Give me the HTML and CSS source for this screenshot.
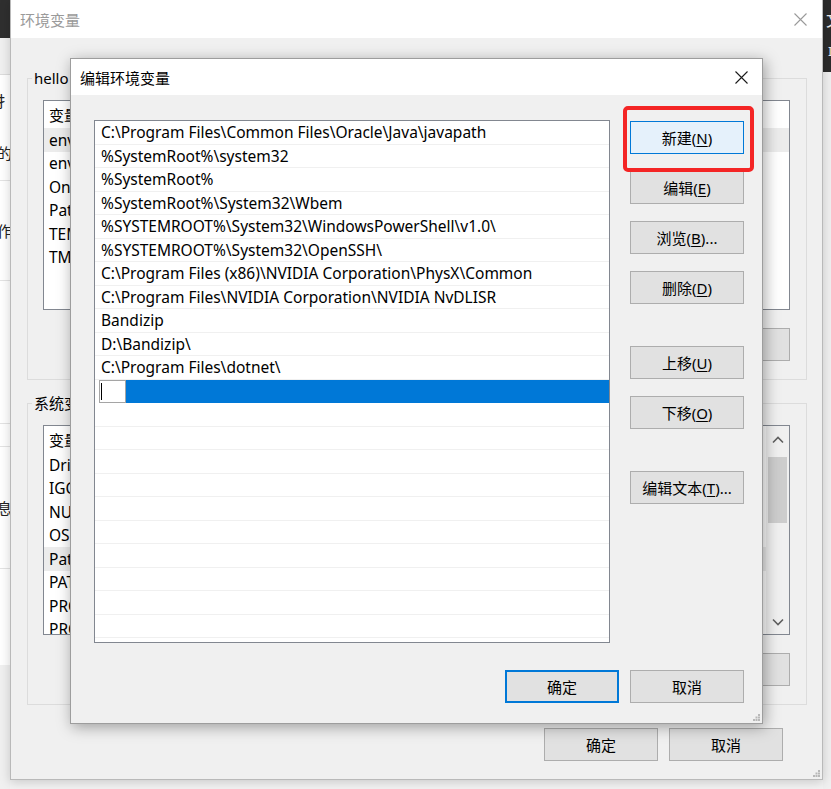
FILE: index.html
```html
<!DOCTYPE html>
<html lang="zh-CN">
<head>
<meta charset="utf-8">
<title>编辑环境变量</title>
<link rel="stylesheet" href="styles.css">
</head>
<body>
<div class="desktop">
  <div class="strip left-strip">
    <div class="ls-dark"></div>
    <div class="ls-gray"></div>
    <div class="ls-cell h50"><span class="frag">处理扌</span></div>
    <div class="ls-cell h55"><span class="frag">目的</span></div>
    <div class="ls-cell h100 lined"><span class="frag">操作</span></div>
    <div class="ls-cell h143 lined"></div>
    <div class="ls-cell h23 lined"></div>
    <div class="ls-cell h122 lined"><span class="frag">信息</span></div>
    <div class="ls-cell h97 lined"></div>
    <div class="ls-rest lined"></div>
  </div>
  <div class="strip right-strip">
    <div class="rs-dark"><span class="rs-a">文</span><span class="rs-b">I</span></div>
  </div>

  <div class="win outer">
    <div class="titlebar outer-title">
      <span class="title dim">环境变量</span>
      <svg class="close" width="13" height="13" viewBox="0 0 13 13"><path d="M0.5 0.5L12.5 12.5M12.5 0.5L0.5 12.5" stroke="#9a9a9a" stroke-width="1.1" fill="none"/></svg>
    </div>
    <div class="outer-body">
      <div class="group">
        <div class="legend">hello 的用户变量(<u>U</u>)</div>
        <div class="listview">
          <div class="lv-head"><span class="c1">变量</span><span class="c2">值</span></div>
          <div class="lv-row hl"><span class="c1">env_home</span><span class="c2"></span></div>
          <div class="lv-row"><span class="c1">env_path</span><span class="c2"></span></div>
          <div class="lv-row"><span class="c1">OneDrive</span><span class="c2"></span></div>
          <div class="lv-row"><span class="c1">Path</span><span class="c2"></span></div>
          <div class="lv-row"><span class="c1">TEMP</span><span class="c2"></span></div>
          <div class="lv-row"><span class="c1">TMP</span><span class="c2"></span></div>
        </div>
        <div class="btnrow">
          <button class="btn">新建(<u>N</u>)...</button>
          <button class="btn">编辑(<u>E</u>)...</button>
          <button class="btn">删除(<u>D</u>)</button>
        </div>
      </div>
      <div class="group sys">
        <div class="legend">系统变量(<u>S</u>)</div>
        <div class="listview scrolled">
          <div class="lv-main">
            <div class="lv-head"><span class="c1">变量</span><span class="c2">值</span></div>
            <div class="lv-row"><span class="c1">DriverData</span><span class="c2"></span></div>
            <div class="lv-row"><span class="c1">IGCCSVC_DB</span><span class="c2"></span></div>
            <div class="lv-row"><span class="c1">NUMBER_OF_PROCESSORS</span><span class="c2"></span></div>
            <div class="lv-row"><span class="c1">OS</span><span class="c2"></span></div>
            <div class="lv-row hl"><span class="c1">Path</span><span class="c2"></span></div>
            <div class="lv-row"><span class="c1">PATHEXT</span><span class="c2"></span></div>
            <div class="lv-row"><span class="c1">PROCESSOR_ARCHITECTURE</span><span class="c2"></span></div>
            <div class="lv-row"><span class="c1">PROCESSOR_IDENTIFIER</span><span class="c2"></span></div>
          </div>
          <div class="vscroll">
            <svg class="arrow" width="12" height="8" viewBox="0 0 12 8"><path d="M1 6.5L6 1.5L11 6.5" stroke="#606060" stroke-width="1.6" fill="none"/></svg>
            <div class="track"><div class="thumb"></div></div>
            <svg class="arrow" width="12" height="8" viewBox="0 0 12 8"><path d="M1 1.5L6 6.5L11 1.5" stroke="#606060" stroke-width="1.6" fill="none"/></svg>
          </div>
        </div>
        <div class="btnrow">
          <button class="btn">新建(<u>W</u>)...</button>
          <button class="btn">编辑(<u>I</u>)...</button>
          <button class="btn">删除(<u>L</u>)</button>
        </div>
      </div>
      <div class="footer outer-footer">
        <button class="btn">确定</button>
        <button class="btn">取消</button>
      </div>
    </div>
    <svg class="grip" width="7" height="7" viewBox="0 0 7 7"><g fill="#b8b8b8"><rect x="5" y="0" width="2" height="2"/><rect x="2.5" y="2.5" width="2" height="2"/><rect x="5" y="2.5" width="2" height="2"/><rect x="0" y="5" width="2" height="2"/><rect x="2.5" y="5" width="2" height="2"/><rect x="5" y="5" width="2" height="2"/></g></svg>
  </div>

  <div class="win inner">
    <div class="titlebar inner-title">
      <span class="title">编辑环境变量</span>
      <svg class="close" width="13" height="13" viewBox="0 0 13 13"><path d="M0.5 0.5L12.5 12.5M12.5 0.5L0.5 12.5" stroke="#1a1a1a" stroke-width="1.1" fill="none"/></svg>
    </div>
    <div class="inner-body">
      <div class="pathlist">
        <div class="p-row">C:\Program Files\Common Files\Oracle\Java\javapath</div>
        <div class="p-row">%SystemRoot%\system32</div>
        <div class="p-row">%SystemRoot%</div>
        <div class="p-row">%SystemRoot%\System32\Wbem</div>
        <div class="p-row">%SYSTEMROOT%\System32\WindowsPowerShell\v1.0\</div>
        <div class="p-row">%SYSTEMROOT%\System32\OpenSSH\</div>
        <div class="p-row">C:\Program Files (x86)\NVIDIA Corporation\PhysX\Common</div>
        <div class="p-row">C:\Program Files\NVIDIA Corporation\NVIDIA NvDLISR</div>
        <div class="p-row">Bandizip</div>
        <div class="p-row">D:\Bandizip\</div>
        <div class="p-row">C:\Program Files\dotnet\</div>
        <div class="p-row editing"><span class="editbox"><span class="caret"></span></span><span class="selbar"></span></div>
        <div class="p-row"></div>
        <div class="p-row"></div>
        <div class="p-row"></div>
        <div class="p-row"></div>
        <div class="p-row"></div>
        <div class="p-row"></div>
        <div class="p-row"></div>
        <div class="p-row"></div>
        <div class="p-row"></div>
        <div class="p-row"></div>
        <div class="p-row"></div>
      </div>
      <div class="btncol">
        <button class="btn hot b-new">新建(<u>N</u>)</button>
        <button class="btn b-edit">编辑(<u>E</u>)</button>
        <button class="btn b-browse">浏览(<u>B</u>)...</button>
        <button class="btn b-del">删除(<u>D</u>)</button>
        <button class="btn b-up">上移(<u>U</u>)</button>
        <button class="btn b-down">下移(<u>O</u>)</button>
        <button class="btn b-text">编辑文本(<u>T</u>)...</button>
      </div>
    </div>
    <div class="footer inner-footer">
      <button class="btn focus">确定</button>
      <button class="btn">取消</button>
    </div>
    <svg class="grip" width="7" height="7" viewBox="0 0 7 7"><g fill="#b8b8b8"><rect x="5" y="0" width="2" height="2"/><rect x="2.5" y="2.5" width="2" height="2"/><rect x="5" y="2.5" width="2" height="2"/><rect x="0" y="5" width="2" height="2"/><rect x="2.5" y="5" width="2" height="2"/><rect x="5" y="5" width="2" height="2"/></g></svg>
  </div>

  <div class="annot"></div>
</div>
</body>
</html>
```

FILE: styles.css
```css
* { box-sizing: border-box; }
html, body { margin: 0; padding: 0; }
body {
  width: 831px;
  height: 789px;
  overflow: hidden;
  background: #f3f3f3;
  font-family: "Noto Sans", "Noto Sans CJK SC", sans-serif;
  font-size: 15px;
  color: #000;
}
u { text-decoration: underline; text-underline-offset: 2px; text-decoration-thickness: 1px; }

.desktop { position: relative; width: 831px; height: 789px; overflow: hidden; }

/* background windows at the edges */
.strip { position: absolute; top: 0; height: 789px; overflow: hidden; }
.left-strip { left: 0; width: 10px; background: #ffffff; display: flex; flex-direction: column; }
.ls-dark { height: 38px; background: #2f2f2f; }
.ls-gray { height: 37px; background: #f0f0f0; border-bottom: 1px solid #dcdcdc; }
.ls-cell { display: flex; align-items: center; justify-content: flex-end; white-space: nowrap; font-size: 15px; color: #222; }
.ls-cell.lined { border-top: 1px solid #e3e3e3; }
.frag { margin-right: -2px; }
.h50 { height: 50px; }
.h55 { height: 55px; }
.h100 { height: 100px; }
.h143 { height: 143px; }
.h23 { height: 23px; }
.h122 { height: 122px; }
.h97 { height: 97px; }
.ls-rest { flex: 1; background: #f0f0f0; }

.right-strip { right: 0; width: 8px; background: #f0f0f0; }
.rs-dark { height: 72px; background: #2b2b2b; color: #e8e8e8; display: flex; flex-direction: column; padding-top: 9px; padding-left: 3px; white-space: nowrap; }
.rs-a { font-size: 16px; line-height: 22px; }
.rs-b { font-size: 13px; line-height: 16px; margin-top: 12px; padding-left: 2px; }

/* windows */
.win { position: absolute; display: flex; flex-direction: column; background: #f0f0f0; }
.titlebar { display: flex; align-items: center; justify-content: space-between; background: #ffffff; flex: none; }
.title { white-space: nowrap; }
.title.dim { color: #9a9a9a; }

.grip { position: absolute; right: 2px; bottom: 2px; }

.btn {
  font: inherit;
  color: #000;
  width: 114px;
  height: 33px;
  padding: 0;
  margin: 0;
  background: #e1e1e1;
  border: 1px solid #adadad;
  display: flex;
  align-items: center;
  justify-content: center;
  white-space: nowrap;
  flex: none;
}
.btn.hot { background: #e5f1fb; border-color: #0078d7; }
.btn.focus { border: 2px solid #0078d7; }

/* outer window */
.outer {
  left: 10px;
  top: 0;
  width: 813px;
  height: 780px;
  border: 1px solid #b9b9b9;
  border-top: none;
  box-shadow: 0 2px 10px rgba(0,0,0,0.18);
}
.outer-title { height: 38px; padding: 0 15px 0 9px; }
.outer-body { padding: 40px 15px 0 16px; display: flex; flex-direction: column; flex: 1; }

.group {
  border: 1px solid #dcdcdc;
  height: 302px;
  padding: 21px 16px 0 15px;
  display: flex;
  flex-direction: column;
  flex: none;
}
.group.sys { margin-top: 23px; }
.legend {
  align-self: flex-start;
  height: 20px;
  line-height: 20px;
  margin: -32px 0 12px -11px;
  padding: 0 2px;
  background: #f0f0f0;
  white-space: nowrap;
}
.listview {
  height: 210px;
  background: #fff;
  border: 1px solid #828790;
  overflow: hidden;
  flex: none;
}
.listview.scrolled { display: flex; }
.lv-main { flex: 1; overflow: hidden; }
.lv-head { height: 27px; display: flex; align-items: center; }
.lv-row { height: 23.5px; display: flex; align-items: center; font-size: 15.5px; }
.lv-row.hl { background: #ececec; }
.c1 { width: 210px; padding-left: 5px; white-space: nowrap; }
.c2 { flex: 1; padding-left: 6px; border-left: 1px solid #e5e5e5; align-self: stretch; }
.lv-row .c2 { border-left: none; }

.vscroll { width: 23px; background: #f0f0f0; display: flex; flex-direction: column; align-items: center; padding: 10px 0 8px; }
.vscroll .arrow { flex: none; }
.track { flex: 1; width: 100%; padding: 13px 2px 0; }
.thumb { height: 66px; background: #cdcdcd; }

.btnrow { display: flex; justify-content: flex-end; gap: 11px; margin-top: 18px; }

.outer-footer { display: flex; justify-content: flex-end; gap: 11px; margin-top: 23px; padding-right: 24px; }

/* inner window */
.inner {
  left: 70px;
  top: 58px;
  width: 693px;
  height: 666px;
  border: 1px solid #9d9d9d;
  box-shadow: 2px 3px 14px rgba(0,0,0,0.35);
}
.inner-title { height: 36px; padding: 0 14px 0 9px; }
.inner-body {
  display: flex;
  gap: 20px;
  padding: 25px 18px 0 23px;
  flex: none;
}
.pathlist {
  width: 516px;
  height: 523px;
  background: #fff;
  border: 1px solid #828790;
  overflow: hidden;
  flex: none;
}
.p-row {
  height: 23.5px;
  border-bottom: 1px solid #f0f0f0;
  padding-left: 6px;
  display: flex;
  align-items: center;
  white-space: nowrap;
  font-size: 15.5px;
}
.p-row.editing { padding-left: 4px; border-bottom: none; }
.editbox {
  width: 27px;
  height: 23.5px;
  background: #fff;
  border: 1px solid #a5a5a5;
  flex: none;
  display: flex;
  align-items: center;
  padding-left: 1px;
}
.caret { width: 1px; height: 17px; background: #000; }
.selbar { flex: 1; align-self: stretch; background: #0078d7; }

.btncol { display: flex; flex-direction: column; padding-top: 1px; }
.b-edit, .b-browse, .b-del, .b-down { margin-top: 17px; }
.b-up, .b-text { margin-top: 42px; }

.inner-footer { display: flex; justify-content: flex-end; gap: 11px; padding: 27px 18px 0 0; }

/* annotation */
.annot {
  position: absolute;
  left: 623px;
  top: 106px;
  width: 131px;
  height: 66px;
  border: 4px solid #f42525;
  border-radius: 5px;
}
```
